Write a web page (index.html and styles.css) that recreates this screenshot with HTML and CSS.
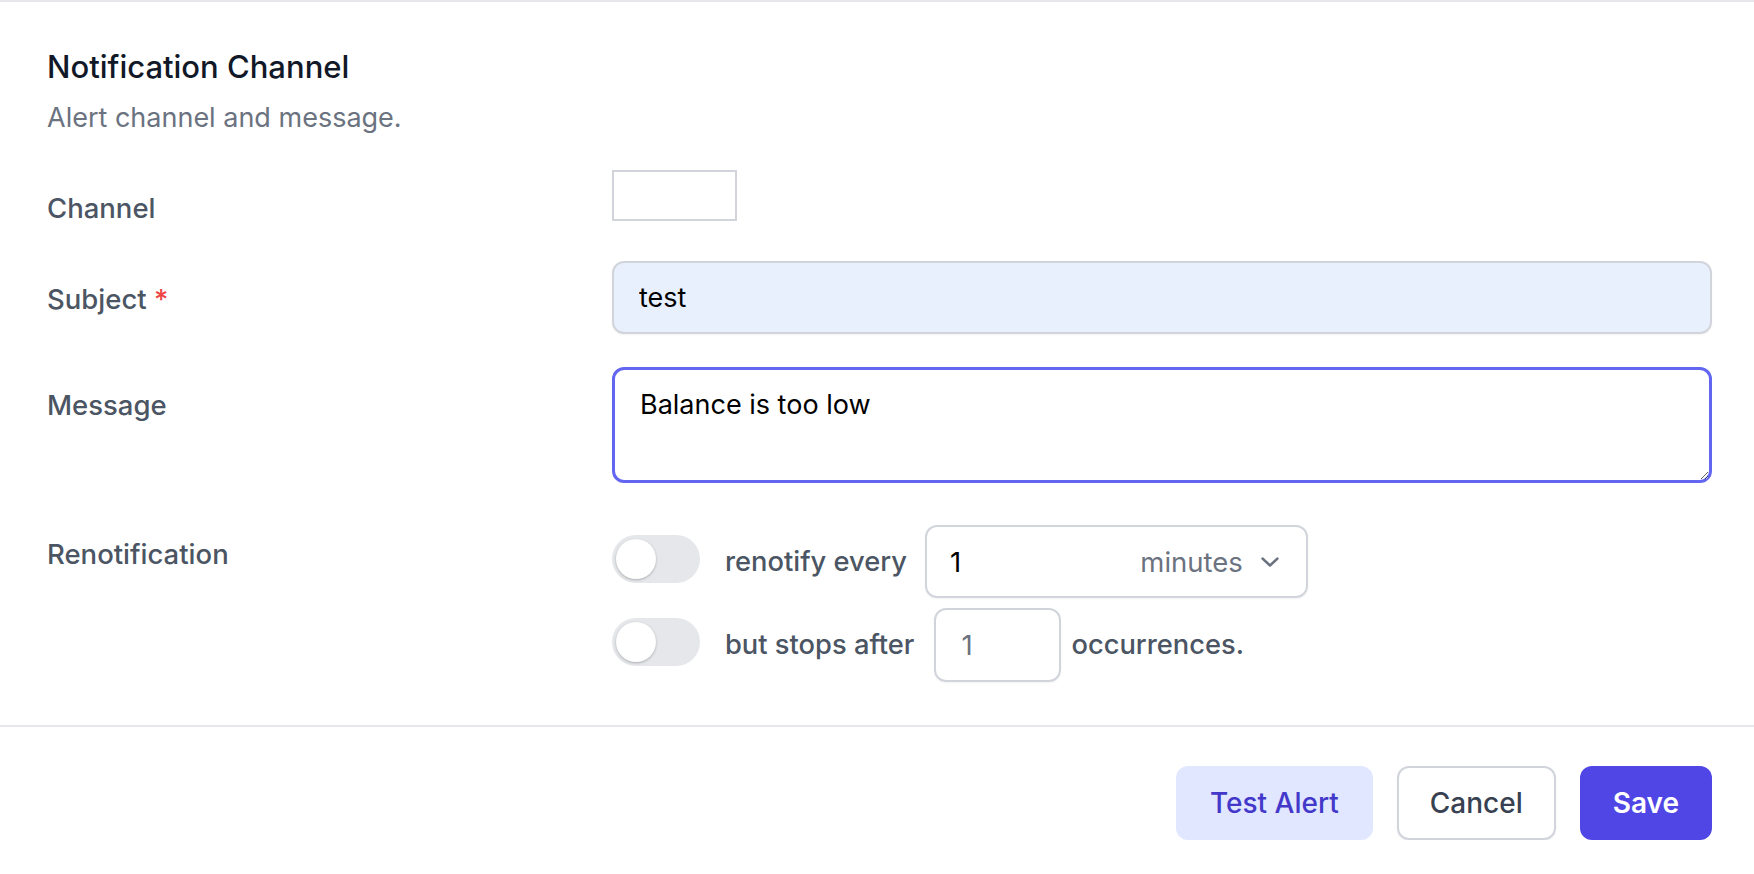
FILE: index.html
```html
<!DOCTYPE html>
<html lang="en">
<head>
<meta charset="utf-8">
<title>Notification Channel</title>
<link rel="stylesheet" href="styles.css">
</head>
<body>
<div class="panel">
  <div class="content">
    <div class="header">
      <h3 class="title">Notification Channel</h3>
      <p class="subtitle">Alert channel and message.</p>
    </div>
    <div class="form">
      <div class="row">
        <label class="label">Channel</label>
        <div class="control"><div class="channel-box"></div></div>
      </div>
      <div class="row">
        <label class="label">Subject <span class="req">*</span></label>
        <div class="control"><input class="text-input" type="text" value="test"></div>
      </div>
      <div class="row">
        <label class="label">Message</label>
        <div class="control"><textarea class="textarea">Balance is too low</textarea></div>
      </div>
      <div class="row row-renotify">
        <label class="label label-renotify">Renotification</label>
        <div class="control renotify">
          <div class="line">
            <div class="toggle"><span class="knob"></span></div>
            <span class="inline-text">renotify every</span>
            <div class="select">
              <span class="num">1</span>
              <span class="unit">minutes</span>
              <svg class="chev" width="20" height="12" viewBox="0 0 20 12"><path d="M2.5 2.5 L10 9.5 L17.5 2.5" fill="none" stroke="#6b7280" stroke-width="2.4" stroke-linecap="round" stroke-linejoin="round"/></svg>
            </div>
          </div>
          <div class="line">
            <div class="toggle"><span class="knob"></span></div>
            <span class="inline-text">but stops after</span>
            <div class="count">1</div>
            <span class="inline-text after">occurrences.</span>
          </div>
        </div>
      </div>
    </div>
  </div>
  <div class="footer">
    <button class="btn btn-soft">Test Alert</button>
    <button class="btn btn-outline">Cancel</button>
    <button class="btn btn-primary">Save</button>
  </div>
</div>
</body>
</html>
```
FILE: styles.css
```css
* { box-sizing: border-box; }

body {
  margin: 0;
  background: #ffffff;
  font-family: Inter, "Noto Sans", sans-serif;
  color: #111827;
}

.panel {
  border-top: 2px solid #e5e7eb;
}

.content {
  padding: 45px 42px 43px 47px;
}

.title {
  margin: 0;
  font-size: 31px;
  line-height: 40px;
  font-weight: 500;
  color: #111827;
}

.subtitle {
  margin: 11px 0 0;
  font-size: 27px;
  line-height: 40px;
  color: #6b7280;
}

.form {
  margin-top: 32px;
  display: flex;
  flex-direction: column;
  gap: 33px;
}

.row {
  display: grid;
  grid-template-columns: 565px 1fr;
  align-items: start;
}

.label {
  padding-top: 18px;
  font-size: 27.5px;
  line-height: 40px;
  font-weight: 500;
  color: #4b5563;
}

.req { color: #ef4444; }

.channel-box {
  width: 125px;
  height: 51px;
  border: 2px solid #d1d5db;
  background: #fff;
}

.text-input {
  display: block;
  width: 100%;
  height: 73px;
  margin: 0;
  padding: 0 25px;
  border: 2px solid #d1d5db;
  border-radius: 12px;
  background: #e8f0fe;
  box-shadow: 0 1px 2px rgba(0, 0, 0, 0.05);
  font-family: Inter, "Noto Sans", sans-serif;
  font-size: 27px;
  color: #000;
  outline: none;
}

.textarea {
  display: block;
  width: 100%;
  height: 116px;
  margin: 0;
  padding: 15px 25px;
  border: 3px solid #6366f1;
  border-radius: 12px;
  background: #fff;
  font-family: Inter, "Noto Sans", sans-serif;
  font-size: 27px;
  line-height: 40px;
  color: #000;
  outline: none;
  resize: vertical;
}

.row-renotify { margin-top: 9px; }
.label-renotify { padding-top: 9px; }

.renotify {
  display: flex;
  flex-direction: column;
  gap: 10px;
}

.line {
  display: flex;
  align-items: center;
}

.toggle {
  flex: none;
  width: 88px;
  height: 48px;
  padding: 4px;
  margin-right: 25px;
  margin-bottom: 6px;
  border-radius: 24px;
  background: #e5e7eb;
}

.knob {
  display: block;
  width: 40px;
  height: 40px;
  border-radius: 50%;
  background: #fff;
  box-shadow: 0 1px 3px rgba(0, 0, 0, 0.2), 0 1px 2px rgba(0, 0, 0, 0.06);
}

.inline-text {
  font-size: 27.3px;
  line-height: 40px;
  font-weight: 500;
  color: #4b5563;
  white-space: nowrap;
}

.select {
  display: flex;
  align-items: center;
  width: 383px;
  height: 73px;
  margin-left: 18px;
  padding: 0 26px 0 23px;
  border: 2px solid #d1d5db;
  border-radius: 12px;
  box-shadow: 0 1px 2px rgba(0, 0, 0, 0.05);
  font-size: 27.5px;
}

.num { flex: 1; color: #000; }
.unit { color: #6b7280; margin-right: 17px; }
.chev { flex: none; }

.count {
  display: flex;
  align-items: center;
  width: 127px;
  height: 74px;
  margin-left: 20px;
  padding-left: 25px;
  border: 2px solid #d1d5db;
  border-radius: 12px;
  box-shadow: 0 1px 2px rgba(0, 0, 0, 0.05);
  font-size: 27.5px;
  color: #6b7280;
}

.after { margin-left: 10px; }

.footer {
  display: flex;
  justify-content: flex-end;
  gap: 24px;
  padding: 39px 42px 0 0;
  border-top: 2px solid #e5e7eb;
}

.btn {
  height: 74px;
  padding: 0 31px;
  border: 2px solid transparent;
  border-radius: 12px;
  font-family: Inter, "Noto Sans", sans-serif;
  font-size: 28px;
  font-weight: 500;
  cursor: pointer;
}

.btn-soft { background: #e0e7ff; color: #4338ca; padding: 0 32px; }
.btn-outline { background: #fff; border-color: #d1d5db; color: #374151; box-shadow: 0 1px 2px rgba(0, 0, 0, 0.05); }
.btn-primary { background: #4f46e5; color: #fff; font-weight: 600; }
```
